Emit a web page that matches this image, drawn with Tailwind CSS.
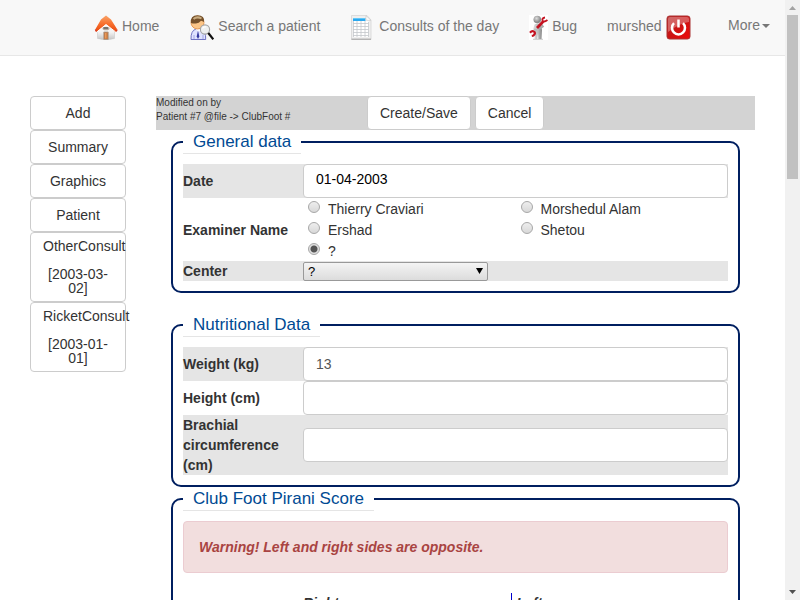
<!DOCTYPE html>
<html lang="en">
<head>
<meta charset="utf-8">
<meta name="viewport" content="width=device-width, initial-scale=1">
<title>ClubFoot consult</title>
<script src="https://cdn.jsdelivr.net/npm/@tailwindcss/browser@4"></script>
</head>
<body class="flex h-screen overflow-hidden bg-white font-['Liberation_Sans',Arial,sans-serif] text-[14px] leading-[20px] text-[#333]">
<div class="min-w-0 flex-1 overflow-hidden">
  <nav class="flex h-14 items-center border-b border-[#e7e7e7] bg-[#f8f8f8] pl-20 text-[#777]">
    <a href="#" class="flex items-center gap-1 pr-4 pl-[14px]">
      <svg class="h-[25px] w-6" viewBox="0 0 24 25">
        <defs>
          <linearGradient id="roof" x1="0" y1="0" x2="0" y2="1"><stop offset="0" stop-color="#f9a469"/><stop offset=".5" stop-color="#f8702e"/><stop offset="1" stop-color="#e8480f"/></linearGradient>
          <linearGradient id="wall" x1="0" y1="0" x2="0" y2="1"><stop offset="0" stop-color="#fff"/><stop offset=".6" stop-color="#f2f2f2"/><stop offset="1" stop-color="#c4c4c4"/></linearGradient>
        </defs>
        <path d="M3.500 14 12 6l8.500 8v9.500q-8.500 2.500-17 0z" fill="url(#wall)" stroke="#c4c4c4" stroke-width=".5"/>
        <path d="M12 .5 7 4.500 1.500 14l1 3 9.500-7.500 9.500 7.500 1.500-3L17 4.500z" fill="url(#roof)"/>
        <path d="m3 16.800 9-7.300 9.500 7.300" fill="none" stroke="#fff" stroke-width="1"/>
        <path d="m1.300 14.500 1 2M23.200 14.500l-1 2" stroke="#d1301a" stroke-width="1.200"/>
        <ellipse cx="12" cy="13.500" rx="3.500" ry="1.800" fill="#b5a69b"/><path d="M9.500 13h4.500" stroke="#555" stroke-width="1.300"/>
        <path d="M9.800 17h4.400v7.500H9.800z" fill="#c8743a" stroke="#a79a8c" stroke-width=".8"/>
        <path d="M11 18h1.500v5.500H11z" fill="#e89a58"/>
      </svg>
      <span class="pb-[3px]">Home</span>
    </a>
    <a href="#" class="flex items-center gap-1 px-[15px]">
      <svg class="h-[25px] w-6" viewBox="0 0 24 25">
        <path d="M1 24.500q-.3-9 5-10.500h5q5 1.500 4.700 10.500z" fill="#dfe3ff" stroke="#6265bd" stroke-width=".9"/>
        <path d="M4 24v-4M13 24v-4" stroke="#9298dc" stroke-width=".8"/>
        <path d="m5.500 14 3 3 3-3z" fill="#fff"/>
        <path d="m8 15.500-1.300 6L8 24l1.300-2.500z" fill="#3539a0"/>
        <ellipse cx="7.500" cy="7.500" rx="6.500" ry="6.500" fill="#fbc587" stroke="#e08a3c" stroke-width=".8"/>
        <path d="M1 8Q0 .3 7.500 .3T14 7q-1.500-1-3-1.200-2 2.500-5 2.700T1 8z" fill="#76512a"/>
        <path d="M3.500 4q3.500-3 8-.5" fill="none" stroke="#c9ac80" stroke-width="2"/>
        <circle cx="15" cy="14.500" r="4.600" fill="#eef0f0" stroke="#a5a5a5" stroke-width="1.100"/>
        <path d="M12.500 13.500q1-2 3.500-1.500" fill="none" stroke="#fff" stroke-width="1.200"/>
        <path d="m18.300 18 5 6.300" stroke="#111" stroke-width="2.200"/>
      </svg>
      <span class="pb-[3px]">Search a patient</span>
    </a>
    <a href="#" class="flex items-center gap-1 px-[15px]">
      <svg class="h-[25px] w-[25px]" viewBox="0 0 25 25">
        <path d="M1.500 .5H17l4 4.500v19.500H1.500z" fill="#efefef" stroke="#d6d6d6" stroke-width=".8"/>
        <path d="M1.500 24.200H21" stroke="#aaa" stroke-width="1.200"/>
        <path d="M3 5.500h15.500V22H3z" fill="#fff"/>
        <path d="M3 3h12.500v3H3z" fill="#2ba8ee"/><path d="M3 3h12.500v1H3z" fill="#63c8f8"/>
        <path d="M3 8.500h15.500M3 11.500h15.500M3 14.500h15.500M3 17.500h15.500M3 20.500h15.500M3.500 6v16M7 6v16M11 6v16M15 6v16M18.500 7v15" stroke="#c4c8cb" stroke-width=".8"/>
        <path d="M16 .7 15.800 5q2.500.8 5.200.3z" fill="#fafafa" stroke="#c5c5c5" stroke-width=".6"/>
      </svg>
      <span class="pb-[3px]">Consults of the day</span>
    </a>
    <a href="#" class="flex items-center gap-1 px-[15px]">
      <svg class="h-[25px] w-[19px]" viewBox="0 0 19 25">
        <defs>
          <linearGradient id="fig"><stop offset="0" stop-color="#e2e2e2"/><stop offset=".6" stop-color="#b8b8b8"/><stop offset="1" stop-color="#888"/></linearGradient>
          <radialGradient id="head" cx=".4" cy=".35"><stop offset="0" stop-color="#ddd"/><stop offset="1" stop-color="#8d8d8d"/></radialGradient>
        </defs>
        <path d="M0 0h19v25H0z" fill="#fff"/>
        <path d="M4 24.300h10" stroke="#c8c8c8" stroke-width="1"/>
        <path d="M5.500 9.500q3.500-2 6.500 0l1 5.500-.5 9H9.300L9 17.500 8.300 24H5.500l.5-7.500-2-2z" fill="url(#fig)"/>
        <circle cx="8.300" cy="4.500" r="3.800" fill="url(#head)"/>
        <path d="m12 9 1.800 2.500-3 2" fill="none" stroke="#aaa" stroke-width="2"/>
        <path d="m8 13 6.200-6.500" stroke="#c41220" stroke-width="2.700"/>
        <path d="M16 2.500q-3 .3-2.500 2.800.8 2.500 5-.3" fill="none" stroke="#c41220" stroke-width="1.900"/>
        <path d="M1 17.700q2-2.500 4.300-1 1.500 2-.8 3.800l-1.700.3" fill="none" stroke="#c41220" stroke-width="2.200"/>
        <path d="m5 14.500 3 .5" stroke="#bbb" stroke-width="2"/>
      </svg>
      <span class="pb-[3px]">Bug</span>
    </a>
    <a href="#" class="flex items-center gap-1 px-[15px]">
      <span class="pb-[3px]">murshed</span>
      <svg class="h-[25px] w-[25px]" viewBox="0 0 25 25">
        <defs><linearGradient id="pw" x1="0" y1="0" x2="1" y2="1"><stop offset="0" stop-color="#b52a2a"/><stop offset=".5" stop-color="#cc1414"/><stop offset="1" stop-color="#f00808"/></linearGradient></defs>
        <rect x="1" y="1" width="23" height="23" rx="2.500" fill="url(#pw)" stroke="#a33" stroke-width="1"/>
        <path d="M2 4q0-2 2-2h17q2 0 2 2v3Q14 8 2 17z" fill="#fff" opacity=".3"/>
        <path d="M8 8.200a6.500 6.500 0 1 0 9 0" fill="none" stroke="#fff" stroke-width="2.500"/>
        <path d="M12.500 4.500v8" stroke="#fff" stroke-width="2.500"/>
      </svg>
    </a>
    <button type="button" class="mb-[5px] ml-auto flex items-center gap-[2px] px-[15px]">
      <span>More</span>
      <svg class="mt-[2px] h-1 w-2" viewBox="0 0 8 4"><path d="M0 0h8L4 4z" fill="#777"/></svg>
    </button>
  </nav>

  <div class="flex items-start gap-[30px] px-[30px] pt-10">
    <aside class="flex w-24 shrink-0 flex-col">
      <button type="button" class="rounded border border-[#ccc] bg-white px-3 py-[6px]">Add</button>
      <button type="button" class="rounded border border-[#ccc] bg-white px-3 py-[6px]">Summary</button>
      <button type="button" class="rounded border border-[#ccc] bg-white px-3 py-[6px]">Graphics</button>
      <button type="button" class="rounded border border-[#ccc] bg-white px-3 py-[6px]">Patient</button>
      <button type="button" class="rounded border border-[#ccc] bg-white px-3 py-[6px] leading-[14px]">OtherConsult<br><br>[2003-03-02]</button>
      <button type="button" class="rounded border border-[#ccc] bg-white px-3 py-[6px] leading-[14px]">RicketConsult<br><br>[2003-01-01]</button>
    </aside>

    <main class="min-w-0 flex-1">
      <form>
        <div class="flex gap-1 bg-[#d3d3d3]">
          <p class="w-[207px] text-[10px] leading-[14px]">Modified on by<br>Patient #7 @file -&gt; ClubFoot #</p>
          <button type="button" class="rounded border border-[#ccc] bg-white px-3 py-[6px]">Create/Save</button>
          <button type="button" class="rounded border border-[#ccc] bg-white px-3 py-[6px]">Cancel</button>
        </div>

        <fieldset class="mx-[15px] mb-5 rounded-[10px] border-2 border-[#001f60] p-[10px]">
          <legend class="border-b border-[#e5e5e5] px-[10px] text-[17px] leading-[23px] text-[#004a93]">General data</legend>
          <table class="w-full table-fixed">
            <tr class="bg-[#e5e5e5]">
              <th class="w-[120px] text-left"><label for="date">Date</label></th>
              <td><input id="date" type="text" value="01-04-2003" class="block h-[34px] w-full rounded border border-[#ccc] bg-white px-3 pb-1 text-black"></td>
            </tr>
            <tr>
              <th class="text-left">Examiner Name</th>
              <td>
                <div class="grid grid-cols-2 leading-[23px]">
                  <label class="flex h-[21px] items-start gap-2 pl-[5px]"><input type="radio" name="examiner" class="mt-[3px] size-3 appearance-none rounded-full border border-[#a8a8a8] bg-linear-to-b from-[#eee] to-[#d8d8d8] checked:bg-[radial-gradient(circle,#555_0_2px,#555_3px,#e0e0e0_4px)]">Thierry Craviari</label>
                  <label class="flex h-[21px] items-start gap-2 pl-[5px]"><input type="radio" name="examiner" class="mt-[3px] size-3 appearance-none rounded-full border border-[#a8a8a8] bg-linear-to-b from-[#eee] to-[#d8d8d8] checked:bg-[radial-gradient(circle,#555_0_2px,#555_3px,#e0e0e0_4px)]">Morshedul Alam</label>
                  <label class="flex h-[21px] items-start gap-2 pl-[5px]"><input type="radio" name="examiner" class="mt-[3px] size-3 appearance-none rounded-full border border-[#a8a8a8] bg-linear-to-b from-[#eee] to-[#d8d8d8] checked:bg-[radial-gradient(circle,#555_0_2px,#555_3px,#e0e0e0_4px)]">Ershad</label>
                  <label class="flex h-[21px] items-start gap-2 pl-[5px]"><input type="radio" name="examiner" class="mt-[3px] size-3 appearance-none rounded-full border border-[#a8a8a8] bg-linear-to-b from-[#eee] to-[#d8d8d8] checked:bg-[radial-gradient(circle,#555_0_2px,#555_3px,#e0e0e0_4px)]">Shetou</label>
                  <label class="flex h-[21px] items-start gap-2 pl-[5px]"><input type="radio" name="examiner" checked class="mt-[3px] size-3 appearance-none rounded-full border border-[#a8a8a8] bg-linear-to-b from-[#eee] to-[#d8d8d8] checked:bg-[radial-gradient(circle,#555_0_2px,#555_3px,#e0e0e0_4px)]">?</label>
                </div>
              </td>
            </tr>
            <tr class="bg-[#e5e5e5]">
              <th class="text-left"><label for="center">Center</label></th>
              <td>
                <div class="relative flex h-5 w-[185px] items-end">
                  <select id="center" class="h-[19px] w-full appearance-none rounded-xs border border-[#999] bg-linear-to-b from-[#f4f4f4] to-[#dcdcdc] px-1 text-[13px] leading-[17px] text-black"><option>?</option></select>
                  <svg class="pointer-events-none absolute top-[7px] right-[5px] h-[6px] w-[7px]" viewBox="0 0 7 6"><path d="M0 0h7L3.500 6z" fill="#000"/></svg>
                </div>
              </td>
            </tr>
          </table>
        </fieldset>

        <fieldset class="mx-[15px] rounded-[10px] border-2 border-[#001f60] p-[10px]">
          <legend class="border-b border-[#e5e5e5] px-[10px] text-[17px] leading-[23px] text-[#004a93]">Nutritional Data</legend>
          <table class="w-full table-fixed">
            <tr class="bg-[#e5e5e5]">
              <th class="w-[120px] text-left"><label for="weight">Weight (kg)</label></th>
              <td><input id="weight" type="text" value="13" class="block h-[34px] w-full rounded border border-[#ccc] bg-white px-3 text-[#555]"></td>
            </tr>
            <tr>
              <th class="text-left"><label for="height">Height (cm)</label></th>
              <td><input id="height" type="text" class="block h-[34px] w-full rounded border border-[#ccc] bg-white px-3 text-[#555]"></td>
            </tr>
            <tr class="bg-[#e5e5e5]">
              <th class="text-left"><label for="brachial">Brachial circumference (cm)</label></th>
              <td><input id="brachial" type="text" class="block h-[34px] w-full rounded border border-[#ccc] bg-white px-3 text-[#555]"></td>
            </tr>
          </table>
        </fieldset>

        <fieldset class="mx-[15px] rounded-[10px] border-2 border-[#001f60] p-[10px]">
          <legend class="border-b border-[#e5e5e5] px-[10px] text-[17px] leading-[23px] text-[#004a93]">Club Foot Pirani Score</legend>
          <div role="alert" class="mb-5 rounded border border-[#ebccd1] bg-[#f2dede] p-[15px] font-bold text-[#a94442] italic">Warning! Left and right sides are opposite.</div>
          <table class="w-full table-fixed">
            <tr class="text-left italic">
              <td class="w-[120px]"></td>
              <th class="w-[208px]">Right</th>
              <th class="border-l border-[#0000cd] pl-[5px]">Left</th>
            </tr>
          </table>
        </fieldset>
      </form>
    </main>
  </div>
</div>

<div aria-hidden="true" class="flex w-[15px] shrink-0 flex-col items-center bg-[#f1f1f1]">
  <svg class="h-[15px] w-[15px]" viewBox="0 0 15 15"><path d="M4 10h7L7.500 6z" fill="#a3a3a3"/></svg>
  <div class="h-[164px] w-[11px] bg-[#c1c1c1]"></div>
  <svg class="mt-auto h-[15px] w-[15px]" viewBox="0 0 15 15"><path d="M4 5h7L7.500 9z" fill="#505050"/></svg>
</div>
</body>
</html>
